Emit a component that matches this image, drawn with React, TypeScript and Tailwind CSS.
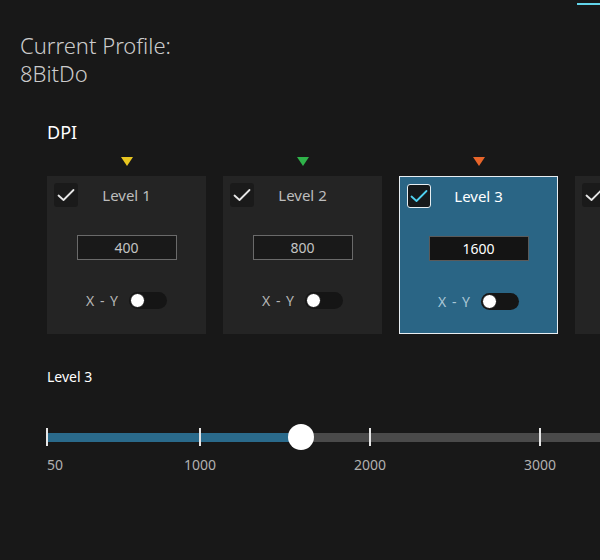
import React from "react";

type Level = { name: string; value: string; color: string; selected?: boolean; partial?: boolean };

const levels: Level[] = [
  { name: "Level 1", value: "400", color: "#e8c620" },
  { name: "Level 2", value: "800", color: "#2fb34a" },
  { name: "Level 3", value: "1600", color: "#e8652a", selected: true },
  { name: "Level 4", value: "3200", color: "#3a8ee0", partial: true },
];

function Check({ selected }: { selected?: boolean }) {
  return (
    <div
      className={
        "w-[24px] h-[24px] rounded-[3px] flex items-center justify-center " +
        (selected ? "bg-[#16191b] border-[1.5px] border-[#e6eef2]" : "bg-[#1a1a1a]")
      }
    >
      <svg width="18" height="14" viewBox="0 0 18 14">
        <path
          d="M1.5 7.5 L6.5 12 L16.5 2"
          fill="none"
          stroke={selected ? "#4fd0f0" : "#e6e6e6"}
          strokeWidth="1.8"
          strokeLinecap="round"
          strokeLinejoin="round"
        />
      </svg>
    </div>
  );
}

function Card({ l }: { l: Level }) {
  return (
    <div className="flex flex-col items-center shrink-0 w-[159px]">
      <svg width="12" height="10" viewBox="0 0 12 10" className="mb-[9px]">
        {!l.partial && <polygon points="0,0 12,0 6,9" fill={l.color} />}
      </svg>
      <div
        className={
          "w-[159px] h-[158px] flex flex-col items-center px-[7px] pt-[7px] " +
          (l.selected ? "bg-[#2a6585] border border-[#e8eef2] pt-[6px] px-[6px]" : "bg-[#242424]")
        }
      >
        <div className="grid grid-cols-[24px_1fr_24px] items-center w-full h-[24px]">
          <Check selected={l.selected} />
          <div
            className={
              "text-center text-[15px] " + (l.selected ? "text-white" : "text-[#bdbdbd]")
            }
          >
            {l.partial ? "" : l.name}
          </div>
          <div />
        </div>
        {!l.partial && (
          <>
            <div
              className={
                "mt-[28px] w-[100px] h-[25px] border flex items-center justify-center text-[14px] " +
                (l.selected
                  ? "bg-[#141414] border-[#5a5a5a] text-white"
                  : "bg-[#191919] border-[#6a6a6a] text-[#c4c4c4]")
              }
            >
              {l.value}
            </div>
            <div className="mt-[30px] flex items-center gap-[10px]">
              <span
                className={
                  "text-[14px] tracking-[1px] " +
                  (l.selected ? "text-[#a9c6d6]" : "text-[#b5b5b5]")
                }
              >
                X - Y
              </span>
              <div className="w-[38px] h-[17px] rounded-full bg-[#151515] flex items-center px-[1px]">
                <div className="w-[15px] h-[15px] rounded-full bg-white border border-[#111]" />
              </div>
            </div>
          </>
        )}
      </div>
    </div>
  );
}

const ticks = [
  { x: 0, label: "50", align: "left" },
  { x: 153, label: "1000", align: "center" },
  { x: 323, label: "2000", align: "center" },
  { x: 493, label: "3000", align: "center" },
];

export default function App() {
  return (
    <div
      className="w-[600px] h-[560px] bg-[#181818] overflow-hidden relative"
      style={{ fontFamily: '"Noto Sans", "Open Sans", sans-serif' }}
    >
      <div className="flex justify-end pt-[3px]">
        <div className="w-[23px] h-[2px] bg-[#62d4ea]" />
      </div>
      <div className="pl-[20px] pt-[26px] text-[22px] leading-[28px] text-[#cbcbcb] font-light">
        <div>Current Profile:</div>
        <div>8BitDo</div>
      </div>
      <div className="pl-[47px] pt-[33px]">
        <div className="text-[18px] leading-[24px] text-white">DPI</div>
        <div className="mt-[13px] flex gap-[17px]">
          {levels.map((l) => (
            <Card key={l.name} l={l} />
          ))}
        </div>
        <div className="mt-[33px] text-[14px] text-white leading-[20px]">Level 3</div>
        <div className="relative mt-[46px] h-[9px] w-[600px] bg-[#4a4a4a]">
          <div className="absolute left-0 top-0 h-[9px] w-[254px] bg-[#2a6a8b]" />
          {ticks.map((t) => (
            <div
              key={t.label}
              className="absolute top-[-5px] w-[2px] h-[18px] bg-[#e6e6e6]"
              style={{ left: t.x - 1 }}
            />
          ))}
          <div className="absolute top-[-9px] left-[241px] w-[26px] h-[26px] rounded-full bg-white" />
          {ticks.map((t) => (
            <div
              key={t.label + "l"}
              className="absolute top-[21px] text-[14px] text-[#b0b0b0]"
              style={
                t.align === "left"
                  ? { left: 0 }
                  : { left: t.x, transform: "translateX(-50%)" }
              }
            >
              {t.label}
            </div>
          ))}
        </div>
      </div>
    </div>
  );
}
